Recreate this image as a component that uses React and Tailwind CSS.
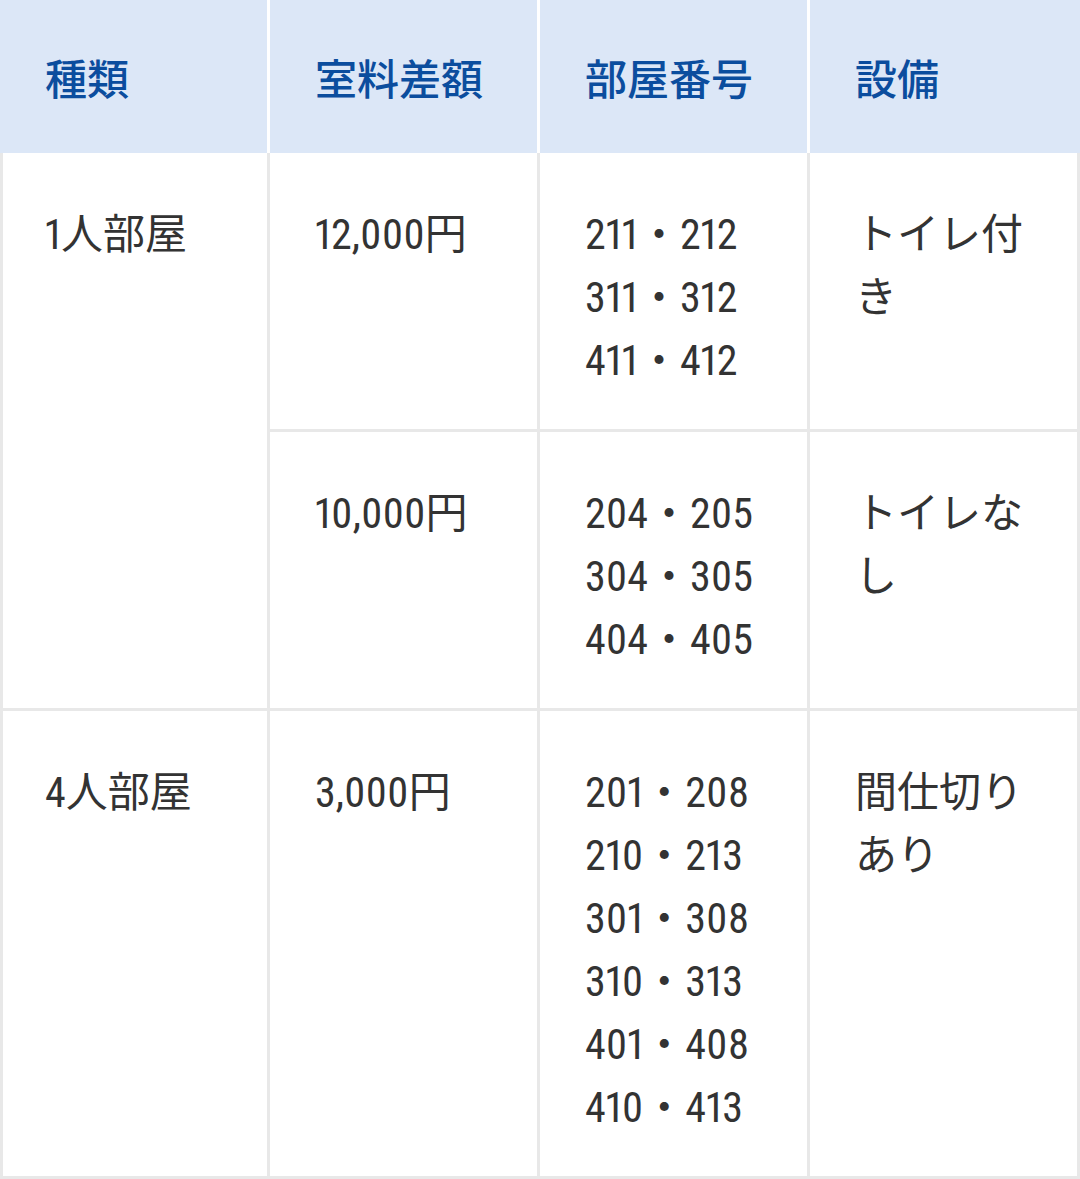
const rows = [
  {
    type: '1人部屋',
    plans: [
      { price: '12,000円', rooms: ['211・212', '311・312', '411・412'], note: 'トイレ付き' },
      { price: '10,000円', rooms: ['204・205', '304・305', '404・405'], note: 'トイレなし' },
    ],
  },
  {
    type: '4人部屋',
    plans: [
      {
        price: '3,000円',
        rooms: ['201・208', '210・213', '301・308', '310・313', '401・408', '410・413'],
        note: '間仕切りあり',
      },
    ],
  },
];

const headers = ['種類', '室料差額', '部屋番号', '設備'];

function Cell({ children, className = '' }) {
  return (
    <div
      className={`bg-white pt-[50px] pb-[37px] px-[45px] text-[42px] leading-[63px] text-[#333] font-stretch-[78%] proportional-nums ${className}`}
      style={{ fontFamily: 'Roboto, "Noto Sans CJK JP", sans-serif' }}
    >
      {children}
    </div>
  );
}

export default function App() {
  return (
    <div
      className="w-[1080px] bg-white"
      style={{ fontFamily: '"Noto Sans CJK JP", sans-serif' }}
    >
      <div className="grid grid-cols-[267px_267px_267px_273px] gap-x-[3px]">
        {headers.map((h) => (
          <div
            key={h}
            className="h-[153px] flex items-center px-[45px] bg-[#dce7f7] text-[42px] font-medium text-[#0b4d9e]"
          >
            {h}
          </div>
        ))}
      </div>
      <div className="grid grid-cols-[264px_267px_267px_267px] gap-[3px] bg-[#e8e8e8] px-[3px] pb-[3px]">
        {rows.map((row) =>
          row.plans.map((plan, i) => (
            <>
              {i === 0 && (
                <Cell
                  key={row.type}
                  className={`pl-[42px] ${row.plans.length === 2 ? 'row-span-2' : ''}`}
                >
                  {row.type}
                </Cell>
              )}
              <Cell key={plan.price}>{plan.price}</Cell>
              <Cell key={plan.price + 'r'}>
                {plan.rooms.map((r) => (
                  <div key={r} className="whitespace-nowrap">{r}</div>
                ))}
              </Cell>
              <Cell key={plan.price + 'n'} className="pr-[40px]">{plan.note}</Cell>
            </>
          ))
        )}
      </div>
    </div>
  );
}
